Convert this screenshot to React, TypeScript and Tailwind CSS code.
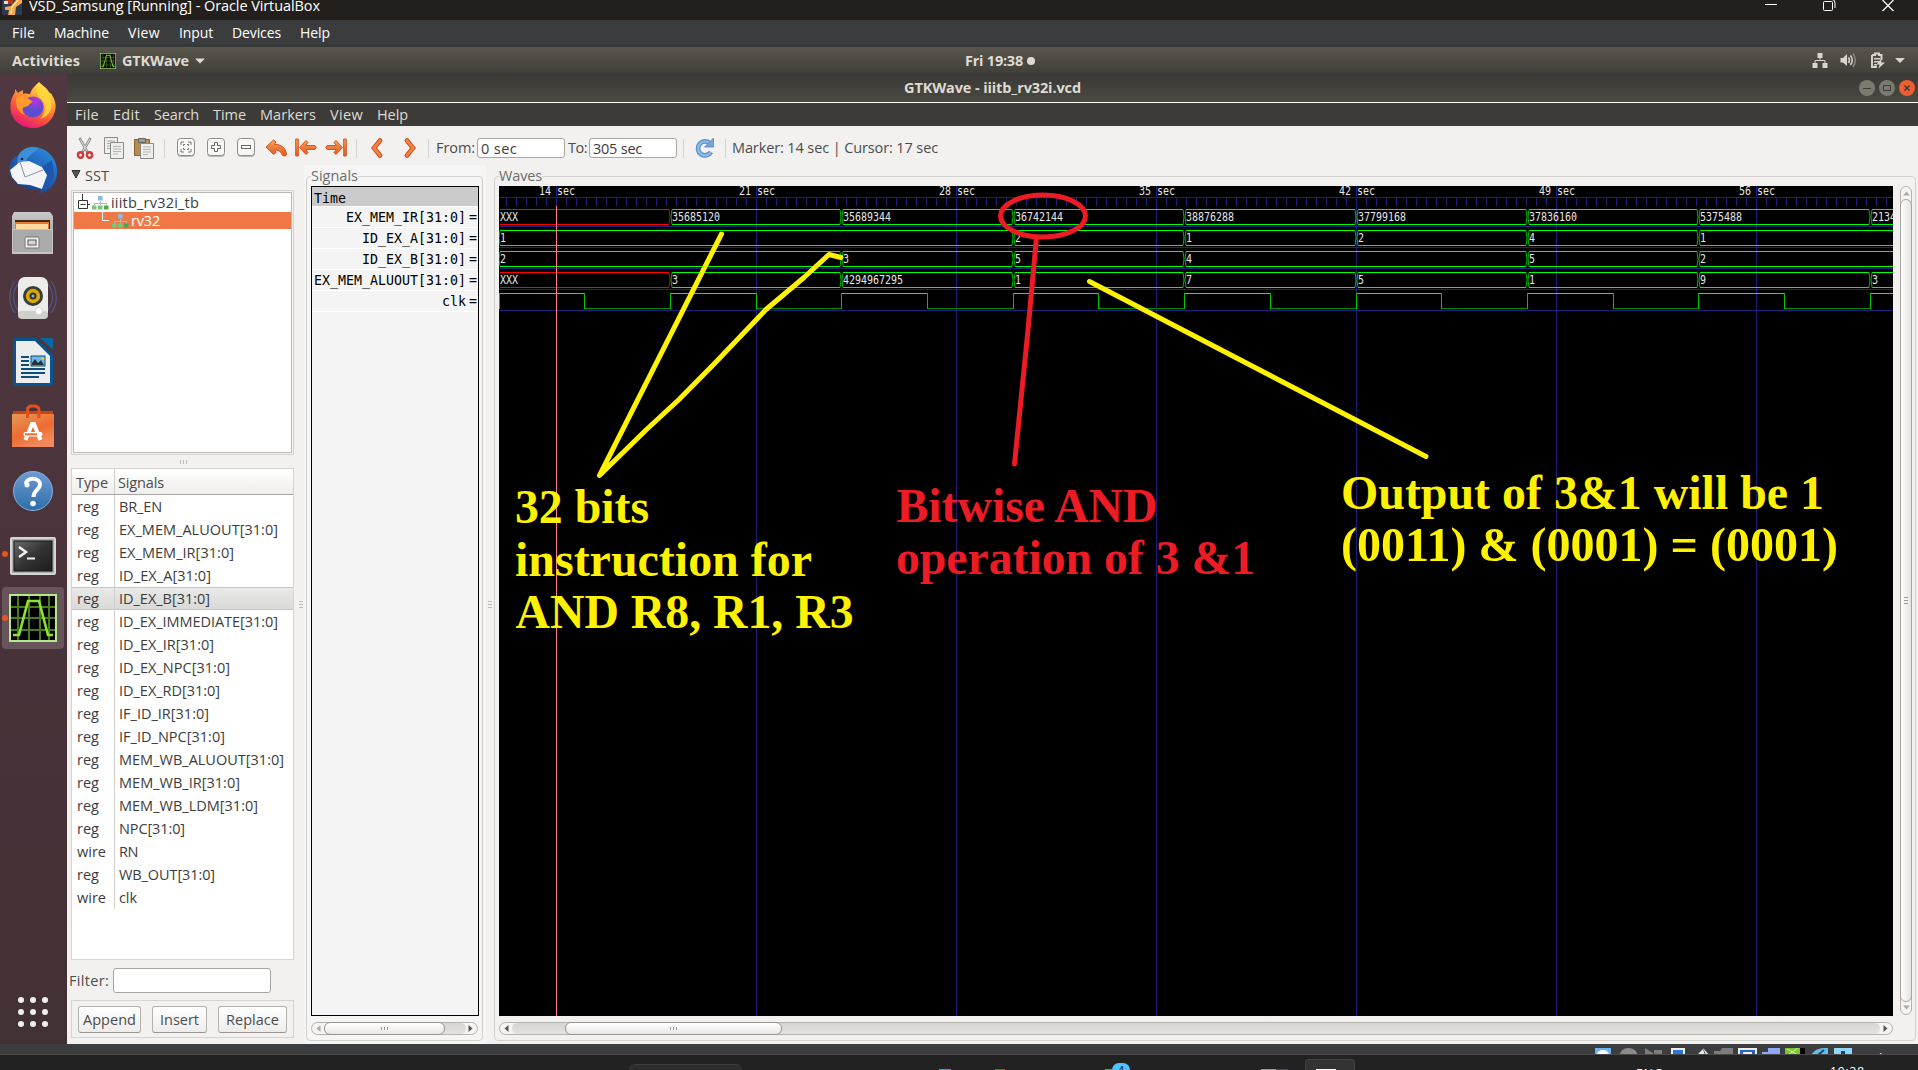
import { useLayoutEffect, useRef, type ReactNode } from "react";

/* Text run whose tracking is adjusted so that it fills a given width. */
function Fit({ w, children, className = "" }: { w: number; children: string; className?: string }) {
  const ref = useRef<HTMLSpanElement>(null);
  useLayoutEffect(() => {
    const el = ref.current;
    if (!el) return;
    el.style.letterSpacing = "0px";
    const natural = el.getBoundingClientRect().width;
    el.style.letterSpacing = `${(w - natural) / children.length}px`;
  }, [w, children]);
  return (
    <span className={`block shrink-0 whitespace-pre ${className}`} style={{ width: w }}>
      <span ref={ref}>{children}</span>
    </span>
  );
}

type Word = [string, number];

const vmMenu: Word[] = [["File", 23], ["Machine", 55], ["View", 32], ["Input", 34], ["Devices", 49], ["Help", 30]];
const appMenu: Word[] = [["File", 24], ["Edit", 27], ["Search", 45], ["Time", 33], ["Markers", 56], ["View", 33], ["Help", 31]];

const signals: [string, string, number][] = [
  ["reg", "BR_EN", 43],
  ["reg", "EX_MEM_ALUOUT[31:0]", 159],
  ["reg", "EX_MEM_IR[31:0]", 115],
  ["reg", "ID_EX_A[31:0]", 92],
  ["reg", "ID_EX_B[31:0]", 91],
  ["reg", "ID_EX_IMMEDIATE[31:0]", 159],
  ["reg", "ID_EX_IR[31:0]", 95],
  ["reg", "ID_EX_NPC[31:0]", 111],
  ["reg", "ID_EX_RD[31:0]", 101],
  ["reg", "IF_ID_IR[31:0]", 90],
  ["reg", "IF_ID_NPC[31:0]", 106],
  ["reg", "MEM_WB_ALUOUT[31:0]", 165],
  ["reg", "MEM_WB_IR[31:0]", 121],
  ["reg", "MEM_WB_LDM[31:0]", 139],
  ["reg", "NPC[31:0]", 66],
  ["wire", "RN", 19],
  ["reg", "WB_OUT[31:0]", 96],
  ["wire", "clk", 18],
];

const traceNames = ["EX_MEM_IR[31:0]", "ID_EX_A[31:0]", "ID_EX_B[31:0]", "EX_MEM_ALUOUT[31:0]", "clk"];

/* ---------- wave canvas ---------- */

const LEFT = 499;
const RIGHT = 1893;
const xOf = (sec: number) => Math.floor(556.01 + ((sec - 14) * 200) / 7) + 0.5;

type Seg = [number, string];
const buses: Seg[][] = [
  [[12, "XXX"], [18, "35685120"], [24, "35689344"], [30, "36742144"], [36, "38876288"], [42, "37799168"], [48, "37836160"], [54, "5375488"], [60, "2134"]],
  [[12, "1"], [30, "2"], [36, "1"], [42, "2"], [48, "4"], [54, "1"]],
  [[12, "2"], [24, "3"], [30, "5"], [36, "4"], [48, "5"], [54, "2"]],
  [[12, "XXX"], [18, "3"], [24, "4294967295"], [30, "1"], [36, "7"], [42, "5"], [48, "1"], [54, "9"], [60, "3"]],
];

function Mono({ x, y, t }: { x: number; y: number; t: string }) {
  return (
    <text x={x} y={y} fill="#e8e8e8" fontSize="11.5" textLength={t.length * 6} lengthAdjust="spacingAndGlyphs" fontFamily='"DejaVu Sans Mono", monospace'>
      {t}
    </text>
  );
}

function Bus({ segs, top }: { segs: Seg[]; top: number }) {
  const t = top + 0.5;
  const b = top + 15.5;
  const m = top + 8;
  return (
    <g fill="none">
      {segs.map(([s, label], i) => {
        const a = xOf(s);
        const open = i === segs.length - 1;
        const e = open ? RIGHT : xOf(segs[i + 1][0]);
        const red = label === "XXX";
        const bright = red ? "#ff0000" : "#00ff00";
        const dark = red ? "#d00000" : "#00b400";
        return (
          <g key={s}>
            <path stroke={bright} d={`M${a + 1.5} ${t}H${open ? e : e - 1.5}M${a + 1.5} ${b}H${open ? e : e - 1.5}`} />
            {!(red && i === 0) && <path stroke={dark} d={`M${a + 1.5} ${t}L${a + 0.5} ${m}L${a + 1.5} ${b}`} />}
            {!open && <path stroke={dark} d={`M${e - 1.5} ${t}L${e - 0.5} ${m}L${e - 1.5} ${b}`} />}
            <Mono x={a + 1.5} y={top + 12} t={label} />
          </g>
        );
      })}
    </g>
  );
}

function Note({ x, y, w, fill, children }: { x: number; y: number; w: number; fill: string; children: string }) {
  return (
    <text x={x} y={y} fill={fill} fontSize="48" fontWeight="700" textLength={w} lengthAdjust="spacingAndGlyphs" fontFamily='"Liberation Serif", serif'>
      {children}
    </text>
  );
}

function WaveCanvas() {
  const ticks = Array.from({ length: 139 }, (_, i) => 506.5 + i * 10).filter((x) => x < RIGHT);
  const labels = [14, 21, 28, 35, 42, 49, 56];
  const clk = Array.from({ length: 17 }, (_, i) => 12 + i * 3);
  return (
    <svg width="1394" height="830" viewBox="499 186 1394 830" className="block bg-black">
      <g stroke="#20207c" fill="none">
        <path d={`M${LEFT} 197.5H${RIGHT}`} />
        {ticks.map((x) => (
          <path key={x} d={`M${x} 198V206`} />
        ))}
        {[226.5, 247.5, 268.5, 289.5, 310.5].map((y) => (
          <path key={y} d={`M${LEFT} ${y}H${RIGHT}`} />
        ))}
        {labels.map((s) => (
          <path key={s} d={`M${xOf(s)} 186V1016`} />
        ))}
      </g>
      {labels.map((s) => (
        <Mono key={s} x={xOf(s) - 17.5} y={195} t={`${s} sec`} />
      ))}
      {buses.map((segs, i) => (
        <Bus key={i} segs={segs} top={209 + i * 21} />
      ))}
      <g fill="none">
        {clk.map((s, i) => {
          const a = Math.max(xOf(s), LEFT + 0.5);
          const e = Math.min(xOf(s + 3), RIGHT);
          const high = i % 2 === 0;
          return (
            <g key={s}>
              <path stroke={high ? "#00ff00" : "#008c00"} d={`M${a} ${high ? 293.5 : 308.5}H${e}`} />
              <path stroke="#00c800" d={`M${a} 293V309`} />
            </g>
          );
        })}
      </g>
      <path d="M556.5 206V1016" stroke="#ff8080" />
      <g fill="none" strokeWidth="5" strokeLinecap="round" strokeLinejoin="round">
        <path stroke="#fff200" d="M721.5 234L599.5 475.5L646 430L679 399.500L714.500 363.500L766 309.500L804 277.500L829 254.500L841 257.500" />
        <path stroke="#fff200" d="M1089.5 281.5L1426 456.5" />
        <ellipse cx="1043" cy="216" rx="42.5" ry="21" stroke="#ed1c24" />
        <path stroke="#ed1c24" d="M1036.5 237L1028 330L1014.5 464" />
      </g>
      <Note x={515} y={523} w={134} fill="#fff200">32 bits</Note>
      <Note x={515} y={575.5} w={297} fill="#fff200">instruction for</Note>
      <Note x={515.5} y={628} w={338} fill="#fff200">AND R8, R1, R3</Note>
      <Note x={896.5} y={521.5} w={261} fill="#ed1c24">Bitwise AND</Note>
      <Note x={896} y={574} w={359} fill="#ed1c24">{"operation of 3 &1"}</Note>
      <Note x={1341} y={508.5} w={483} fill="#fff200">{"Output of 3&1 will be 1"}</Note>
      <Note x={1341} y={561} w={497} fill="#fff200">{"(0011) & (0001) = (0001)"}</Note>
    </svg>
  );
}

/* ---------- dock ---------- */

function GtkWaveIcon({ size }: { size: number }) {
  return (
    <svg width={size} height={size} viewBox="0 0 48 48">
      <rect width="48" height="48" fill="#b4e88c" />
      <rect x="2" y="2" width="44" height="44" fill="#000" />
      <path d="M9 2V46M20 2V46M31 2V46M40 2V46M2 13H46M2 24H46M2 36H46" stroke="#4a7a1c" strokeWidth="2" />
      <path d="M4 41H10L19 7H30L39 41H44" fill="none" stroke="#8ae234" strokeWidth="2.6" />
    </svg>
  );
}

const Firefox = () => (
  <svg width="48" height="48" viewBox="0 0 48 48">
    <defs>
      <linearGradient id="ffA" x1=".8" y1="0" x2=".3" y2="1">
        <stop offset="0" stopColor="#fff44f" /><stop offset=".35" stopColor="#ffa436" /><stop offset=".65" stopColor="#ff5a36" /><stop offset="1" stopColor="#e3147a" />
      </linearGradient>
      <radialGradient id="ffB" cx=".6" cy=".2"><stop offset="0" stopColor="#b833e1" /><stop offset="1" stopColor="#5b4fd0" /></radialGradient>
    </defs>
    <path d="M30 0C33 3 38 6 40 10C41 12 43 11 43 13C46 18 47 22 46.500 26C45 38 36 46 24 46C11 46 1 37 1.500 24C1.500 17 4 14 6 10V7L9 11C11 9 13 9 14 8V12C16 11 19 12 21 12C23 6 27 3 30 0Z" fill="url(#ffA)" />
    <circle cx="24" cy="25" r="10.500" fill="url(#ffB)" />
    <path d="M8 14C13 12 16 15 20 17L24 20C20 21 21 24 16 25C13 25 12 29 16 33C9 31 5 22 8 14Z" fill="#ff9a2b" />
    <path d="M30 0C28 7 26 11 31 16C37 21 38 30 31 37C40 34 44 28 42 18C41 10 33 8 30 0Z" fill="#ffd93b" opacity=".85" />
  </svg>
);

const Thunderbird = () => (
  <svg width="50" height="50" viewBox="0 0 50 50">
    <defs><linearGradient id="tb" x1=".9" y1="0" x2=".2" y2="1"><stop offset="0" stopColor="#2f8fe0" /><stop offset=".5" stopColor="#1f5fb8" /><stop offset="1" stopColor="#123a80" /></linearGradient></defs>
    <path d="M10 11C16 2 25 0 31 3C41 5 48 14 49 24C50 34 45 42 38 46L30 49L33 44C22 46 8 42 3 32C-1 24 3 12 10 11Z" fill="url(#tb)" />
    <path d="M10 11C14 3 23 0 31 4C26 7 22 9 18 16L9 20Z" fill="#3b8fd8" />
    <path d="M2 25L12 17L21 16L34 22L39 30L34 44L22 40L10 39L4 32Z" fill="#f4f4f6" />
    <path d="M12 17L17 32L35 25" fill="none" stroke="#8b93a5" strokeWidth="1" />
    <path d="M34 22L40 31L35 44L42 40L46 30L44 15Z" fill="#1b58ad" />
    <circle cx="14" cy="14" r="1.300" fill="#102548" />
  </svg>
);

const Files = () => (
  <svg width="44" height="44" viewBox="0 0 44 44">
    <defs><linearGradient id="fl" x1="0" y1="0" x2="0" y2="1"><stop offset="0" stopColor="#c9c9c9" /><stop offset="1" stopColor="#8e8e8e" /></linearGradient></defs>
    <path d="M3 0H39L42 4V42H1V4Z" fill="url(#fl)" />
    <rect x="4" y="8" width="35" height="9" fill="#4a2510" />
    <path d="M4 10H38V17H4Z" fill="#e07a2c" /><path d="M5 12H37V17H5Z" fill="#ffd9a0" />
    <path d="M1 17H42V42H1Z" fill="#c4c4c4" /><path d="M2 18H41V40H2Z" fill="#aaaaaa" />
    <rect x="14" y="25" width="14" height="11" rx="1.500" fill="#efefef" stroke="#777" />
    <rect x="17" y="28" width="8" height="5" fill="#d8d8d8" stroke="#555" />
  </svg>
);

const Speaker = () => (
  <svg width="48" height="46" viewBox="0 0 48 46">
    <path d="M6 6C-1 16-1 29 6 38M42 6C49 16 49 29 42 38M9 9C3 17 3 27 9 35M39 9C45 17 45 27 39 35" fill="none" stroke="#4f5680" strokeWidth="1.300" />
    <rect x="9" y="2" width="30" height="42" rx="7" fill="#ececea" />
    <rect x="9" y="36" width="30" height="8" rx="4" fill="#cfcfcc" />
    <circle cx="24" cy="21" r="10" fill="#3a3a38" /><circle cx="24" cy="21" r="7.200" fill="#d3a90c" />
    <circle cx="24" cy="21" r="3.500" fill="#30302c" /><circle cx="24" cy="21" r="1.500" fill="#aaa" />
    <circle cx="30" cy="36" r="3.500" fill="#fff" stroke="#ccc" strokeWidth=".7" />
  </svg>
);

const Writer = () => (
  <svg width="42" height="48" viewBox="0 0 42 48">
    <path d="M3 0H24L41 17V45Q41 48 38 48H4Q1 48 1 45V3Q1 0 3 0Z" fill="#035690" />
    <path d="M28 0H39Q41 0 41 2V12Z" fill="#0369a3" />
    <path d="M4 3H23L38 18V45H4Z" fill="#ededed" />
    <path d="M9 19H17M9 23H17M9 27H17M9 31H33M9 35H33M9 39H27" stroke="#0b4f7c" strokeWidth="2" />
    <rect x="19" y="18" width="14" height="10" fill="#6db9ea" stroke="#0b4f7c" />
    <path d="M20 27V25L23 21L26 25L29 22L32 27Z" fill="#263238" /><circle cx="31" cy="20.500" r="1.500" fill="#f4c430" />
  </svg>
);

const Software = () => (
  <svg width="42" height="44" viewBox="0 0 42 44">
    <defs><linearGradient id="sw" x1="0" y1="0" x2=".5" y2="1"><stop offset="0" stopColor="#e39a5a" /><stop offset=".6" stopColor="#ee6b30" /><stop offset="1" stopColor="#f28a5c" /></linearGradient></defs>
    <path d="M1 7H41V12H1Z" fill="#c74414" /><path d="M0 10H42V43H0Z" fill="url(#sw)" />
    <path d="M15.500 14V6Q15.500 2 20 2H22Q27 2 27 6V14" fill="none" stroke="#e2501c" strokeWidth="3" />
    <path d="M13.500 36L20 20H22L28.500 36" fill="none" stroke="#fff" strokeWidth="4" />
    <rect x="11.500" y="28" width="19" height="4.500" rx="2" fill="#fff" /><rect x="13" y="29.300" width="12" height="2" fill="#ee6b30" />
  </svg>
);

const HelpIcon = () => (
  <svg width="42" height="42" viewBox="0 0 42 42" className="mt-[2px]">
    <defs><linearGradient id="hp" x1="0" y1="0" x2="0" y2="1"><stop offset="0" stopColor="#6f9bd6" /><stop offset="1" stopColor="#2c6ea5" /></linearGradient></defs>
    <circle cx="21" cy="21" r="19.500" fill="url(#hp)" stroke="#84aee0" />
    <path d="M14 14C14 7 28 7 28 14.500C28 19.500 21.500 20 21.500 27" fill="none" stroke="#fff" strokeWidth="4" />
    <circle cx="21" cy="33.500" r="2.800" fill="#fff" /><circle cx="15" cy="15" r="2.500" fill="#fff" />
  </svg>
);

const Terminal = () => (
  <svg width="46" height="38" viewBox="0 0 46 38" className="mt-[3px]">
    <defs><linearGradient id="tm" x1="0" y1="0" x2="1" y2="1"><stop offset="0" stopColor="#6b6b6b" /><stop offset=".5" stopColor="#333" /><stop offset="1" stopColor="#1c1c1c" /></linearGradient></defs>
    <rect x="0" y="0" width="46" height="38" rx="2" fill="#d5d5d5" /><rect x="2" y="2" width="42" height="34" fill="#ababab" />
    <rect x="4" y="4" width="38" height="30" fill="url(#tm)" stroke="#111" />
    <path d="M9 10L16 15L9 20" fill="none" stroke="#f2f2f2" strokeWidth="2.500" /><path d="M17 21.500H25" stroke="#f2f2f2" strokeWidth="2" />
  </svg>
);

function DockItem({ children, running, active }: { children: ReactNode; running?: boolean; active?: boolean }) {
  return (
    <div className="flex h-[64px] w-full items-center">
      <div className={`ml-[2px] flex h-[62px] w-[62px] items-center justify-center rounded ${active ? "bg-[#68555b]" : ""} relative`}>
        {children}
        {running && <span className="absolute top-[28px] left-0 size-[6px] rounded-full bg-[#e95420]" />}
      </div>
    </div>
  );
}

function Dock() {
  return (
    <aside className="flex w-[67px] shrink-0 flex-col bg-linear-to-b from-[#513840] via-[#4a333b] to-[#413034]">
      <DockItem><Firefox /></DockItem>
      <DockItem><Thunderbird /></DockItem>
      <DockItem><Files /></DockItem>
      <DockItem><Speaker /></DockItem>
      <DockItem><Writer /></DockItem>
      <DockItem><Software /></DockItem>
      <DockItem><HelpIcon /></DockItem>
      <DockItem running><Terminal /></DockItem>
      <DockItem running active><GtkWaveIcon size={48} /></DockItem>
      <div className="mt-auto mb-[17px] ml-[18px] grid w-[30px] grid-cols-3 gap-[6px]">
        {Array.from({ length: 9 }, (_, i) => (
          <span key={i} className="size-[6px] rounded-full bg-[#f0f0f0]" />
        ))}
      </div>
    </aside>
  );
}

/* ---------- toolbar ---------- */

const Sep = ({ className = "" }: { className?: string }) => <span className={`h-[19px] w-px shrink-0 bg-[#d5d3d0] ${className}`} />;

function ZoomButton({ children, className }: { children: ReactNode; className: string }) {
  return (
    <svg width="18" height="20" viewBox="0 0 18 20" className={`shrink-0 ${className}`}>
      <rect x=".5" y="1.500" width="17" height="17.500" rx="3" fill="#b9b9b7" />
      <rect x=".5" y=".5" width="17" height="17" rx="3" fill="#f8f8f7" stroke="#8c8c8a" />
      {children}
    </svg>
  );
}

const orange = "url(#or)";

function Toolbar() {
  return (
    <div className="flex h-[39px] shrink-0 items-center pt-[5px] text-[14.5px] text-[#4c4c4c]">
      <svg width="18" height="22" viewBox="0 0 18 22" className="ml-[9px] shrink-0">
        <defs><linearGradient id="or" x1="0" y1="0" x2="0" y2="1"><stop offset="0" stopColor="#f5a35c" /><stop offset="1" stopColor="#e5561f" /></linearGradient></defs>
        <path d="M3.500 1L11.500 15M14.500 1L6.500 15" stroke="#8c8e8a" strokeWidth="2.600" /><path d="M4 2L11 14M14 2L7 14" stroke="#dcdedb" strokeWidth="1" />
        <ellipse cx="4.500" cy="18" rx="2.600" ry="2.800" fill="none" stroke="#cf3a3a" strokeWidth="2.400" /><ellipse cx="13.500" cy="18" rx="2.600" ry="2.800" fill="none" stroke="#cf3a3a" strokeWidth="2.400" />
      </svg>
      <svg width="21" height="22" viewBox="0 0 21 22" className="ml-[10px] shrink-0">
        <path d="M.5 .5H13.500V16.500H.5Z" fill="#eeeeec" stroke="#888a85" /><path d="M3 4H11M3 6.500H11M3 9H8M3 11.500H7" stroke="#aaa" />
        <path d="M6.500 5.500H19.500V21.500H6.500Z" fill="#eeeeec" stroke="#888a85" /><path d="M9 9.500H17M9 12H17M9 14.500H17M9 17H14" stroke="#b5b5b3" />
      </svg>
      <svg width="21" height="22" viewBox="0 0 21 22" className="ml-[9px] shrink-0">
        <path d="M.5 2.500H15.500V18.500H.5Z" fill="#b98b50" stroke="#8a6230" /><path d="M4.500 1.500H11.500V5.500H4.500Z" fill="#9a9a98" stroke="#666" />
        <path d="M6.500 6.500H19.500V21.500H6.500Z" fill="#eeeeec" stroke="#888a85" /><path d="M9 10H17M9 12.500H17M9 15H17M9 17.500H14" stroke="#b5b5b3" />
      </svg>
      <Sep className="ml-[9px]" />
      <ZoomButton className="ml-[12px]">
        <path d="M4 7V4H7M11 4H14V7M14 11V14H11M7 14H4V11M6.500 8V6.500H8M10 6.500H11.500V8M11.500 10V11.500H10M8 11.500H6.500V10" fill="none" stroke="#777" />
      </ZoomButton>
      <ZoomButton className="ml-[12px]">
        <path d="M7.500 4.500H10.500V7.500H13.500V10.500H10.500V13.500H7.500V10.500H4.500V7.500H7.500Z" fill="#fff" stroke="#666" />
      </ZoomButton>
      <ZoomButton className="ml-[12px]">
        <rect x="4.500" y="7.500" width="9" height="3" fill="#fff" stroke="#666" />
      </ZoomButton>
      <svg width="22" height="18" viewBox="0 0 22 18" className="ml-[10px] shrink-0">
        <path d="M1 8L8.500 1L11 3L9.500 5.500C16 5 21 9 21.500 15.500C20.500 17.500 18 17.500 17 15.500C15.500 12 13 11 9.500 11L11 13.500L8.500 15.500Z" fill={orange} stroke="#d9541e" />
      </svg>
      <svg width="22" height="20" viewBox="0 0 22 20" className="ml-[8px] shrink-0">
        <path d="M.7 1H3.300V18H.7Z" fill={orange} stroke="#d9541e" />
        <path d="M4.500 9.500L11 2.500L13 4.500L10.500 7.500H20Q22.500 9.500 20 11.500H10.500L13 14.500L11 16.500Z" fill={orange} stroke="#d9541e" />
      </svg>
      <svg width="22" height="20" viewBox="0 0 22 20" className="ml-[8px] shrink-0">
        <path d="M18.700 1H21.300V18H18.700Z" fill={orange} stroke="#d9541e" />
        <path d="M17.500 9.500L11 2.500L9 4.500L11.500 7.500H2Q-.5 9.500 2 11.500H11.500L9 14.500L11 16.500Z" fill={orange} stroke="#d9541e" />
      </svg>
      <Sep className="ml-[9px]" />
      <svg width="12" height="20" viewBox="0 0 12 20" className="ml-[14px] shrink-0">
        <path d="M9 2.500L3 10L9 17.500" fill="none" stroke="#cf4a16" strokeWidth="4.600" strokeLinecap="round" /><path d="M9 2.500L3 10L9 17.500" fill="none" stroke="#f08544" strokeWidth="2.800" strokeLinecap="round" />
      </svg>
      <svg width="12" height="20" viewBox="0 0 12 20" className="ml-[21px] shrink-0">
        <path d="M3 2.500L9 10L3 17.500" fill="none" stroke="#cf4a16" strokeWidth="4.600" strokeLinecap="round" /><path d="M3 2.500L9 10L3 17.500" fill="none" stroke="#f08544" strokeWidth="2.800" strokeLinecap="round" />
      </svg>
      <Sep className="ml-[12px]" />
      <Fit w={39} className="ml-[7px]">From:</Fit>
      <div className="ml-[2px] flex h-[20px] w-[88px] shrink-0 items-center rounded-[3px] border border-[#a9a6a1] bg-white pt-px pl-[3px] text-[#3c3c3c]">
        <Fit w={36}>0 sec</Fit>
      </div>
      <Fit w={19} className="ml-[3px]">To:</Fit>
      <div className="ml-[2px] flex h-[20px] w-[88px] shrink-0 items-center rounded-[3px] border border-[#a9a6a1] bg-white pt-px pl-[3px] text-[#3c3c3c]">
        <Fit w={49}>305 sec</Fit>
      </div>
      <Sep className="ml-[6px]" />
      <svg width="20" height="22" viewBox="0 0 20 22" className="ml-[11px] shrink-0">
        <path d="M14.500 6A7 7 0 1 0 16 15" fill="none" stroke="#5b90cc" strokeWidth="4.800" /><path d="M14.500 6A7 7 0 1 0 16 15" fill="none" stroke="#8fb8e4" strokeWidth="2.400" />
        <path d="M18.500 1V10H9.500Z" fill="#76a5d8" stroke="#4f86c4" strokeWidth=".8" />
      </svg>
      <Sep className="ml-[10px]" />
      <Fit w={206} className="ml-[6px]">Marker: 14 sec | Cursor: 17 sec</Fit>
    </div>
  );
}

/* ---------- panes ---------- */

const TreeIcon = ({ className }: { className: string }) => (
  <svg width="17" height="14" viewBox="0 0 17 14" className={`shrink-0 ${className}`}>
    <path d="M2.500 9V7.500H14.500V9M8.500 5V9" fill="none" stroke="#b8b8b8" />
    <rect x="6" y="0" width="4.500" height="4.500" fill="#8fb9ea" />
    <path d="M0 9.500H4.500V13.500H0ZM6 9.500H10.500V13.500H6Z" fill="#7cc576" /><path d="M12 9.500H16.500V13.500H12Z" fill="#4fa64a" />
  </svg>
);

function LeftPane() {
  return (
    <div className="flex w-[237px] shrink-0 flex-col pl-[4px] text-[14.5px] text-[#3c3c3c]">
      <div className="flex h-[25px] items-center pb-[3px] text-[#4c4c4c]">
        <svg width="10" height="9" viewBox="0 0 10 9" className="-mt-[3px]"><path d="M1 .5H9L5 8Z" fill="#555" stroke="#333" /></svg>
        <Fit w={24} className="ml-[4px]">SST</Fit>
      </div>
      <div className="h-[265px] w-[223px] border border-[#d6d4d1] bg-[#f2f1f0] p-px">
        <div className="h-full border border-[#bdb9b4] bg-white">
          <div className="flex h-[19px] items-center">
            <svg width="12" height="18" viewBox="0 0 12 18" className="ml-[4px]">
              <path d="M.5 6.500H9.500V14.500H.5ZM2.500 10.500H7.500M4.500 0V6M10 10.500H12" fill="none" stroke="#333" />
            </svg>
            <TreeIcon className="ml-[2px]" />
            <Fit w={88} className="ml-[2px]">iiitb_rv32i_tb</Fit>
          </div>
          <div className="flex h-[17px] items-center bg-[#f07746] text-white">
            <svg width="8" height="17" viewBox="0 0 8 17" className="ml-[28px]"><path d="M.5 0V8.500H7" fill="none" stroke="#fff" /></svg>
            <TreeIcon className="ml-[2px]" />
            <Fit w={29} className="ml-[2px]">rv32</Fit>
          </div>
        </div>
      </div>
      <div className="flex h-[13px] w-[223px] items-center justify-center gap-[2px] pl-px">
        {[0, 1, 2].map((i) => <span key={i} className="h-[4px] w-px bg-[#bbb]" />)}
      </div>
      <div className="h-[492px] w-[223px] border border-[#d6d4d1] bg-white">
        <div className="flex h-[26px] items-center border-b border-[#a8a6a3] bg-linear-to-b from-white to-[#efeeed] text-[#4c4c4c]">
          <div className="flex h-full w-[43px] items-center border-r border-[#d0cecb] pt-[2px] pl-[4px]"><Fit w={32}>Type</Fit></div>
          <Fit w={46} className="mt-[2px] ml-[3px]">Signals</Fit>
        </div>
        {signals.map(([type, name, w]) => (
          <div key={name} className={`flex h-[23px] items-center ${name === "ID_EX_B[31:0]" ? "border-y border-[#c8c7c5] bg-linear-to-b from-[#e9e9e8] to-[#d9d9d7]" : ""}`}>
            <div className="flex h-[23px] w-[43px] items-center border-r border-[#d0cecb] pl-[5px]">
              <Fit w={type === "reg" ? 22 : 29}>{type}</Fit>
            </div>
            <Fit w={w} className="ml-[4px]">{name}</Fit>
          </div>
        ))}
      </div>
      <div className="mt-[8px] -ml-[2px] flex h-[25px] items-center text-[#4c4c4c]">
        <Fit w={40}>Filter:</Fit>
        <div className="ml-[4px] h-[25px] w-[158px] rounded-[3px] border border-[#a9a6a1] bg-white" />
      </div>
      <div className="mt-[7px] flex h-[38px] w-[223px] items-center border border-[#d6d4d1] pl-[6px] text-[#4c4c4c]">
        {([["Append", 53, "w-[63px]"], ["Insert", 39, "ml-[11px] w-[55px]"], ["Replace", 53, "ml-[11px] w-[69px]"]] as [string, number, string][]).map(([t, w, c]) => (
          <div key={t} className={`flex h-[27px] shrink-0 items-center justify-center rounded-[3px] border border-[#b4b1ad] border-b-[#989590] bg-linear-to-b from-white to-[#edeceb] pt-px ${c}`}>
            <Fit w={w}>{t}</Fit>
          </div>
        ))}
      </div>
    </div>
  );
}

const Arrow = ({ d, fill = "#555" }: { d: string; fill?: string }) => (
  <svg width="5" height="7" viewBox="0 0 5 7"><path d={d} fill={fill} /></svg>
);

function HScroll({ before, thumb, leftFill, track }: { before: string; thumb: string; leftFill?: string; track: string }) {
  return (
    <div className="mt-[6px] flex h-[13px] items-center justify-between rounded-full border border-[#b6b2ad] bg-[#f5f4f3] px-[4px]">
      <Arrow d="M4.500 0V7L.5 3.500Z" fill={leftFill} />
      <div className={`flex h-full items-center rounded-full bg-linear-to-b from-[#d6d5d2] to-[#e4e3e1] ${track}`}>
        <span className={`shrink-0 ${before}`} />
        <div className={`flex h-[13px] items-center justify-center gap-[2px] rounded-[6px] border border-[#98948f] bg-linear-to-b from-white to-[#e8e7e6] ${thumb}`}>
          {[0, 1, 2].map((i) => <span key={i} className="h-[3px] w-px bg-[#999]" />)}
        </div>
      </div>
      <Arrow d="M.5 0V7L4.500 3.500Z" />
    </div>
  );
}

const Grip = () => (
  <div className="flex w-[5px] flex-col gap-[2px] pt-[436px]">
    {[0, 1, 2].map((i) => <span key={i} className="h-px w-[4px] bg-[#bbb]" />)}
  </div>
);

function Frame({ title, w, titleLeft, className, children }: { title: string; w: number; titleLeft: string; className: string; children: ReactNode }) {
  return (
    <div className={`relative flex flex-col rounded-[4px] border border-[#d3d1ce] ${className}`}>
      <div className={`absolute -top-[12px] bg-inherit text-[14.5px] leading-[21px] text-[#6c6c6c] ${titleLeft}`}>
        <Fit w={w}>{title}</Fit>
      </div>
      {children}
    </div>
  );
}

function SignalsPane() {
  return (
    <div className="w-[182px] shrink-0 bg-[#f5f5f5] pt-[11px] pl-[2px]">
      <Frame title="Signals" w={47} titleLeft="left-[4px]" className="h-[865px] w-[177px] bg-[#f5f5f5] px-[4px] pt-[9px]">
        <div className="h-[830px] w-[168px] overflow-hidden border border-black bg-[#f4f4f4] font-['DejaVu_Sans_Mono',monospace] text-[13.3px] text-black">
          <div className="flex h-[19px] items-center bg-[#cbcbcb] pt-[4px] pl-[2px]"><Fit w={32}>Time</Fit></div>
          {traceNames.map((n) => (
            <div key={n} className="flex h-[21px] items-center justify-end border-t border-white pt-[2px] pr-px">
              <Fit w={n.length * 8}>{n}</Fit>
              <Fit w={8} className="ml-[3px]">=</Fit>
            </div>
          ))}
          <div className="border-t border-white" />
        </div>
        <HScroll before="w-0" thumb="w-[121px]" leftFill="#aaa" track="w-[142px]" />
      </Frame>
    </div>
  );
}

function WavesPane() {
  return (
    <div className="pt-[11px]">
      <Frame title="Waves" w={43} titleLeft="left-[4px]" className="h-[865px] w-[1422px] bg-[#f2f1f0] pt-[9px] pl-[4px]">
        <div className="flex">
          <WaveCanvas />
          <div className="ml-[7px] flex h-[829px] w-[12px] flex-col items-center justify-between rounded-full border border-[#b6b2ad] bg-[#f5f4f3] py-[4px]">
            <svg width="7" height="5" viewBox="0 0 7 5"><path d="M0 4.500H7L3.500 .5Z" fill="#aaa" /></svg>
            <div className="flex h-[803px] w-[12px] flex-col items-center justify-center gap-[2px] rounded-[6px] border border-[#a8a49f] bg-linear-to-r from-white to-[#e4e3e1]">
              {[0, 1, 2].map((i) => <span key={i} className="h-px w-[4px] bg-[#999]" />)}
            </div>
            <svg width="7" height="5" viewBox="0 0 7 5"><path d="M0 .5H7L3.500 4.500Z" fill="#aaa" /></svg>
          </div>
        </div>
        <div className="w-[1394px]">
          <HScroll before="w-[53px]" thumb="w-[217px]" track="w-[1368px]" />
        </div>
      </Frame>
    </div>
  );
}

/* ---------- host window parts ---------- */

function TitleRow() {
  return (
    <div className="flex h-[20px] items-start justify-between overflow-hidden bg-[#231f1c] text-white">
      <div className="flex">
        <svg width="20" height="15" viewBox="0 0 20 15" className="ml-[2px]">
          <path d="M0 0H20V15H0Z" fill="#2e3b4e" /><path d="M3 0H11V4H3Z" fill="#b23a1c" /><path d="M2 1H6V4H2Z" fill="#e8e0d8" /><path d="M20 0H14L9 6L3 7V10H7L6 15H13L14 7L20 3Z" fill="#f3a94c" /><path d="M16 0L10 7L9 14" stroke="#ffe0a0" strokeWidth="1.500" fill="none" />
        </svg>
        <Fit w={291} className="-mt-[5px] ml-[7px] text-[14.5px] leading-[22px]">VSD_Samsung [Running] - Oracle VirtualBox</Fit>
      </div>
      <svg width="130" height="14" viewBox="0 0 130 14" className="mr-[23px]" fill="none" stroke="#fff">
        <path d="M0 4.500H12" />
        <path d="M58.500 2.500Q58.500 1.500 59.500 1.500H66.500Q67.500 1.500 67.500 2.500V9.500Q67.500 10.500 66.500 10.500H59.500Q58.500 10.500 58.500 9.500ZM61 -.5H67Q70 -.5 70 3V8" />
        <path d="M117.500 0L128.500 11M128.500 0L117.500 11" strokeWidth="1.200" />
      </svg>
    </div>
  );
}

function TopBar() {
  return (
    <div className="grid h-[27px] grid-cols-[1fr_auto_1fr] items-center bg-linear-to-b from-[#5a564d] to-[#3f3e39] text-[14.5px] font-bold text-[#dfdbd2]">
      <div className="flex items-center">
        <Fit w={68} className="ml-[12px]">Activities</Fit>
        <span className="ml-[20px]"><GtkWaveIcon size={16} /></span>
        <Fit w={67} className="ml-[6px]">GTKWave</Fit>
        <svg width="10" height="6" viewBox="0 0 10 6" className="ml-[6px]"><path d="M0 .5H10L5 5.500Z" fill="#dfdbd2" /></svg>
      </div>
      <div className="ml-[83px] flex items-center">
        <Fit w={58}>Fri 19:38</Fit>
        <span className="mr-px ml-[4px] size-[8px] rounded-full bg-[#dfdbd2]" />
      </div>
      <svg width="93" height="17" viewBox="0 0 93 17" className="mr-[13px] justify-self-end" fill="#d8d5cf">
        <path d="M5.500 1H10.500V6H5.500ZM.5 11H5.500V16H.5ZM10.500 11H15.500V16H10.500Z" /><path d="M8 6V8.500M3 11V8.500H13V11" fill="none" stroke="#d8d5cf" />
        <path d="M28.500 6H31L35 2V14L31 10.500H28.500Z" /><path d="M36.500 5.500Q38.500 8 36.500 11M38.500 3.500Q42 8 38.500 13" fill="none" stroke="#d8d5cf" strokeWidth="1.500" /><path d="M41 1.500Q45.500 8 41 15" fill="none" stroke="#8a8780" strokeWidth="1.500" />
        <path d="M60 3H63V1.500H67V3H69.500V8M60 3V15H65" fill="none" stroke="#d8d5cf" strokeWidth="2" /><path d="M62 6H68V7.500H62ZM62 9H67V10.500H62ZM62 12H65V13.500H62Z" /><path d="M69 7L64.500 12.500H67.500L66.500 16.500L73 10.500H69.500Z" />
        <path d="M83 6H93L88 11Z" />
      </svg>
    </div>
  );
}

function AppTitle() {
  return (
    <div className="grid h-[28px] grid-cols-[1fr_auto_1fr] items-center bg-linear-to-b from-[#3a3935] to-[#4a4942] text-[14.5px] font-bold text-[#dfdbd2]">
      <span />
      <Fit w={177}>GTKWave - iiitb_rv32i.vcd</Fit>
      <svg width="58" height="18" viewBox="0 0 58 18" className="mr-[2px] justify-self-end">
        <circle cx="9" cy="9" r="8" fill="#7b7970" /><path d="M5 9.500H13" stroke="#3c3b37" />
        <circle cx="29" cy="9" r="8" fill="#7b7970" /><path d="M25.500 6.500H32.500V11.500H25.500Z" fill="none" stroke="#3c3b37" />
        <circle cx="49" cy="9" r="8" fill="#ec5e30" /><path d="M46.500 6.500L51.500 11.500M51.500 6.500L46.500 11.500" stroke="#3c3b37" strokeWidth="1.500" />
      </svg>
    </div>
  );
}

function StatusRow() {
  return (
    <div className="flex h-[11px] shrink-0 items-start justify-end overflow-hidden border-b border-[#4a4a4a] bg-[#3c3d3f]">
      <svg width="258" height="7" viewBox="1595 1048 258 7" className="mt-[4px]">
        <path d="M1595 1048H1611V1055H1595Z" fill="#6db4f0" /><ellipse cx="1603" cy="1055" rx="6" ry="5" fill="#fff" />
        <ellipse cx="1628.500" cy="1056" rx="9" ry="8" fill="#8a8a8a" />
        <path d="M1645 1048L1653 1053V1055H1645ZM1654 1050H1662V1055H1654Z" fill="#7c7c7c" />
        <path d="M1671 1048H1685V1055H1671Z" fill="#eee" /><path d="M1673 1050H1683V1055H1673Z" fill="#2b74d8" />
        <path d="M1697 1055L1703 1049L1705 1055ZM1703 1048L1709 1055H1706Z" fill="#dfe9f4" />
        <path d="M1714 1051H1720L1722 1048H1733V1055H1714Z" fill="#7d7d7d" />
        <path d="M1738 1048H1757V1055H1738Z" fill="#eee" /><path d="M1740 1050H1755V1055H1740Z" fill="#2b62c8" /><path d="M1743 1052H1752V1055H1743Z" fill="#eee" />
        <path d="M1768 1048H1780V1055H1762V1052H1768Z" fill="#8ea8f4" />
        <path d="M1785 1048H1800V1055H1785Z" fill="#79c62c" /><path d="M1787 1049L1798 1055M1798 1048L1788 1055" stroke="#d2f5a0" /><path d="M1800 1048H1805V1054H1800Z" fill="#000" />
        <path d="M1811 1055Q1816 1047 1828 1048V1055Z" fill="#63bdea" /><path d="M1818 1055L1824 1050" stroke="#14476b" strokeWidth="2" />
        <path d="M1834 1048H1852V1055H1834Z" fill="#8fd8fb" /><path d="M1841 1051H1845V1054H1841Z" fill="#14476b" />
      </svg>
      <div className="mt-[2px] ml-[4px] h-[9px] w-[61px] overflow-hidden text-[13.5px] leading-[20px] text-white"><Fit w={68} className="mt-[2px]">Right Ctrl</Fit></div>
    </div>
  );
}

function Taskbar() {
  return (
    <div className="flex h-[15px] shrink-0 items-end overflow-hidden bg-[#222222]">
      <div className="ml-[629px] h-[6px] w-[113px] rounded-t-[8px] border-t border-[#3d3d3d] bg-[#2e2e2e]" />
      <span className="ml-[197px] h-px w-[12px] bg-[#34a9b8]" />
      <span className="ml-[44px] h-px w-[10px] bg-[#c0392b]" />
      <span className="ml-[100px] h-px w-[7px] bg-[#2fb866]" />
      <div className="h-[7px] w-[18px] overflow-hidden rounded-t-full bg-[#4cc2ff] text-center text-[10px] leading-[15px] text-black">4</div>
      <span className="ml-[131px] h-px w-[15px] bg-[#9a9a9a]" />
      <span className="h-px w-[12px] bg-[#4a4a58]" />
      <div className="ml-[17px] flex h-[11px] w-[50px] items-end justify-center rounded-t-[4px] border border-b-0 border-[#444] bg-[#333] pr-[8px]"><span className="h-px w-[20px] bg-white" /></div>
      <div className="ml-[281px] h-[2px] w-[30px] overflow-hidden text-[12px] text-white"><Fit w={28} className="-mt-[2px] leading-[15px]">ENG</Fit></div>
      <div className="ml-[164px] h-[3px] w-[40px] overflow-hidden text-[12px] text-white"><Fit w={35} className="-mt-[2px] leading-[14px]">19:38</Fit></div>
    </div>
  );
}

export default function App() {
  return (
    <div className="flex h-[1070px] w-[1918px] flex-col overflow-hidden bg-[#3c3d3f] font-['Open_Sans','Noto_Sans',sans-serif]">
      <TitleRow />
      <div className="flex h-[27px] items-center gap-[19px] border-b-[3px] border-[#353938] bg-[#3b3c3e] pt-px pl-[12px] text-[14px] text-white">
        {vmMenu.map(([t, w]) => <Fit key={t} w={w}>{t}</Fit>)}
      </div>
      <TopBar />
      <div className="flex h-[970px] shrink-0">
        <Dock />
        <main className="flex w-[1851px] flex-col bg-[#f2f1f0]">
          <AppTitle />
          <div className="flex h-[24px] shrink-0 items-center gap-[14px] border-t border-white bg-[#3c3b37] pl-[8px] text-[14.5px] text-[#dfdbd2]">
            {appMenu.map(([t, w]) => <Fit key={t} w={w}>{t}</Fit>)}
          </div>
          <Toolbar />
          <div className="flex h-[879px]">
            <div className="flex w-[232px] shrink-0"><LeftPane /></div>
            <Grip />
            <SignalsPane />
            <div className="flex w-[8px] shrink-0 justify-center"><Grip /></div>
            <WavesPane />
          </div>
        </main>
      </div>
      <StatusRow />
      <Taskbar />
    </div>
  );
}
